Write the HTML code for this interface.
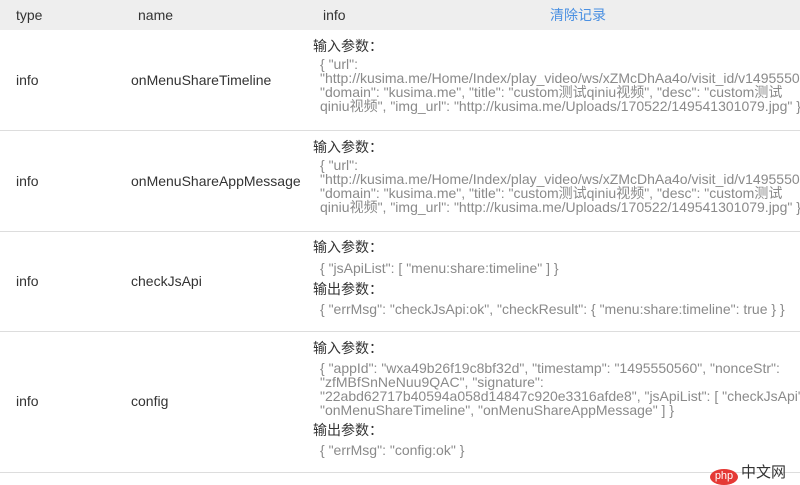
<!DOCTYPE html><html><head><meta charset="utf-8"><style>
body{margin:0;width:800px;height:477px;overflow:hidden;background:#fff;font-family:"Liberation Sans","Noto Sans CJK SC",sans-serif;position:relative}
.t{position:absolute;white-space:nowrap;font-size:14px;line-height:14px;color:#333}
.g{color:#8a8a8a;font-size:14px}
.l{position:absolute;left:0;width:800px;height:1px;background:#ddd}
</style></head><body>
<div style="position:absolute;left:0;top:0;width:800px;height:30px;background:#eee"></div>
<div class="t" style="left:16px;top:8px">type</div>
<div class="t" style="left:138px;top:8px">name</div>
<div class="t" style="left:323px;top:8px">info</div>
<div class="t" style="left:550px;top:8px;color:#4a90e2">清除记录</div>

<div class="t" style="left:16px;top:73px">info</div>
<div class="t" style="left:131px;top:73px">onMenuShareTimeline</div>
<div class="t" style="left:313px;top:39px">输入参数：</div>
<div class="t g" style="left:320px;top:57px">{ "url":</div>
<div class="t g" style="left:320px;top:71px">"http://kusima.me/Home/Index/play_video/ws/xZMcDhAa4o/visit_id/v1495550</div>
<div class="t g" style="left:320px;top:85px">"domain": "kusima.me", "title": "custom测试qiniu视频", "desc": "custom测试</div>
<div class="t g" style="left:320px;top:99px">qiniu视频", "img_url": "http://kusima.me/Uploads/170522/149541301079.jpg" }</div>
<div class="l" style="top:130px"></div>

<div class="t" style="left:16px;top:174px">info</div>
<div class="t" style="left:131px;top:174px">onMenuShareAppMessage</div>
<div class="t" style="left:313px;top:140px">输入参数：</div>
<div class="t g" style="left:320px;top:158px">{ "url":</div>
<div class="t g" style="left:320px;top:172px">"http://kusima.me/Home/Index/play_video/ws/xZMcDhAa4o/visit_id/v1495550</div>
<div class="t g" style="left:320px;top:186px">"domain": "kusima.me", "title": "custom测试qiniu视频", "desc": "custom测试</div>
<div class="t g" style="left:320px;top:200px">qiniu视频", "img_url": "http://kusima.me/Uploads/170522/149541301079.jpg" }</div>
<div class="l" style="top:231px"></div>

<div class="t" style="left:16px;top:274px">info</div>
<div class="t" style="left:131px;top:274px">checkJsApi</div>
<div class="t" style="left:313px;top:240px">输入参数：</div>
<div class="t g" style="left:320px;top:261px">{ "jsApiList": [ "menu:share:timeline" ] }</div>
<div class="t" style="left:313px;top:282px">输出参数：</div>
<div class="t g" style="left:320px;top:302px">{ "errMsg": "checkJsApi:ok", "checkResult": { "menu:share:timeline": true } }</div>
<div class="l" style="top:331px"></div>

<div class="t" style="left:16px;top:394px">info</div>
<div class="t" style="left:131px;top:394px">config</div>
<div class="t" style="left:313px;top:341px">输入参数：</div>
<div class="t g" style="left:320px;top:361px">{ "appId": "wxa49b26f19c8bf32d", "timestamp": "1495550560", "nonceStr":</div>
<div class="t g" style="left:320px;top:375px">"zfMBfSnNeNuu9QAC", "signature":</div>
<div class="t g" style="left:320px;top:389px">"22abd62717b40594a058d14847c920e3316afde8", "jsApiList": [ "checkJsApi",</div>
<div class="t g" style="left:320px;top:403px">"onMenuShareTimeline", "onMenuShareAppMessage" ] }</div>
<div class="t" style="left:313px;top:423px">输出参数：</div>
<div class="t g" style="left:320px;top:443px">{ "errMsg": "config:ok" }</div>
<div class="l" style="top:472px"></div>

<div style="position:absolute;left:710px;top:469px;width:28px;height:16px;border-radius:50%;background:#e53935;color:#fff;font-size:11px;line-height:14px;text-align:center">php</div>
<div class="t" style="left:741px;top:466px;font-size:15px;color:#333">中文网</div>
</body></html>
